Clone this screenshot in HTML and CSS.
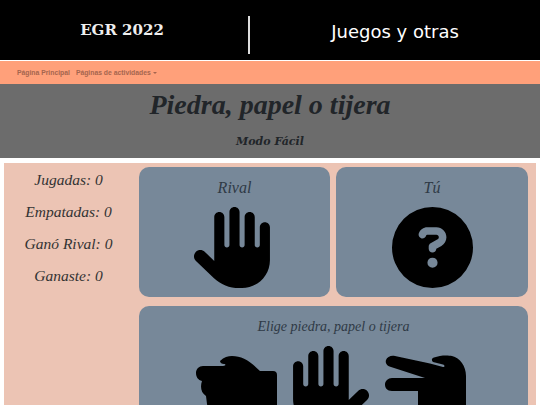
FILE: index.html
```html
<!DOCTYPE html>
<html lang="es">
<head>
  <meta charset="UTF-8">
  <meta name="viewport" content="width=device-width, initial-scale=1.0">
  <title>Piedra, papel o tijera</title>
  <link rel="stylesheet" href="styles.css">
</head>
<body>
  <header class="top">
    <div class="brand">EGR 2022</div>
    <div class="section"><span>Juegos y otras</span></div>
  </header>

  <nav class="menu">
    <a href="#">Página Principal</a>
    <a href="#">Páginas de actividades <i class="caret"></i></a>
  </nav>

  <div class="banner">
    <h1>Piedra, papel o tijera</h1>
    <h2>Modo Fácil</h2>
  </div>

  <main class="game">
    <aside class="score">
      <p>Jugadas: 0</p>
      <p>Empatadas: 0</p>
      <p>Ganó Rival: 0</p>
      <p>Ganaste: 0</p>
    </aside>

    <div class="board">
      <section class="card">
        <h3>Rival</h3>
        <svg class="icon" viewBox="0 0 512 512"><path d="M288 32c0-17.700-14.300-32-32-32s-32 14.300-32 32V240c0 8.800-7.200 16-16 16s-16-7.200-16-16V64c0-17.700-14.300-32-32-32s-32 14.300-32 32V336c0 1.500 0 3.100 .1 4.600L67.600 283c-16-15.200-41.300-14.600-56.600 1.400s-14.600 41.300 1.400 56.600L124.800 448c43.100 41.100 100.400 64 160 64H304c97.200 0 176-78.800 176-176V128c0-17.700-14.300-32-32-32s-32 14.300-32 32V240c0 8.800-7.200 16-16 16s-16-7.200-16-16V64c0-17.700-14.300-32-32-32s-32 14.300-32 32V240c0 8.800-7.200 16-16 16s-16-7.200-16-16V32z"/></svg>
      </section>

      <section class="card">
        <h3>Tú</h3>
        <svg class="icon" viewBox="0 0 512 512"><path d="M256 512A256 256 0 1 0 256 0a256 256 0 1 0 0 512zM169.800 165.300c7.900-22.300 29.100-37.300 52.800-37.300h58.300c34.900 0 63.100 28.300 63.100 63.100c0 22.600-12.100 43.500-31.700 54.800L280 264.400c-.2 13-10.900 23.600-24 23.600c-13.300 0-24-10.700-24-24V250.500c0-8.600 4.600-16.500 12.100-20.800l44.300-25.400c4.700-2.700 7.600-7.700 7.600-13.100c0-8.400-6.800-15.100-15.100-15.100H222.600c-3.400 0-6.400 2.100-7.500 5.300l-.4 1.200c-4.400 12.500-18.200 19-30.600 14.600s-19-18.200-14.600-30.600l.4-1.200zM224 352a32 32 0 1 1 64 0 32 32 0 1 1 -64 0z"/></svg>
      </section>

      <section class="card wide">
        <h3>Elige piedra, papel o tijera</h3>
        <div class="choices">
          <svg class="icon" viewBox="0 0 81 81"><path d="M24 15C28 11 32 10 36 10C46 10 54 15 64 25H77Q81 25 81 29V70Q81 81 70 81H32C20 81 13 72 11 58L10 50C5 47 4 41 6 35C2 34 0 31 0 27C0 23 3 20 7 20H27C30 20 30 18 28 18C26 18 24 17 24 15Z"/></svg>
          <svg class="icon flip" viewBox="0 0 512 512"><path d="M288 32c0-17.700-14.300-32-32-32s-32 14.300-32 32V240c0 8.800-7.200 16-16 16s-16-7.200-16-16V64c0-17.700-14.300-32-32-32s-32 14.300-32 32V336c0 1.500 0 3.100 .1 4.600L67.600 283c-16-15.200-41.300-14.600-56.600 1.400s-14.600 41.300 1.400 56.600L124.800 448c43.100 41.100 100.400 64 160 64H304c97.200 0 176-78.800 176-176V128c0-17.700-14.300-32-32-32s-32 14.300-32 32V240c0 8.800-7.200 16-16 16s-16-7.200-16-16V64c0-17.700-14.300-32-32-32s-32 14.300-32 32V240c0 8.800-7.200 16-16 16s-16-7.200-16-16V32z"/></svg>
          <svg class="icon scissors" viewBox="0 0 91 81"><path d="M15 10L50 17.500L63 21C65 21.500 65 19 63 18.500L53 16C51 14 52 12 54 11.500C60 9 68 9 72 10C80 12 86 20 86 30V70C86 76 82 81 76 81H48C42 81 38 76 38 70V45H12C7 45 5 42 5 38.500C5 35 8 32 12 32H45L11 21C7 20 5 17 6 14C7 11 11 9 15 10Z"/></svg>
        </div>
      </section>
    </div>
  </main>
</body>
</html>
```

FILE: styles.css
```css
html, body {
  margin: 0;
  padding: 0;
}

body {
  background-color: #fff;
  font-family: "Liberation Serif", serif;
  overflow: hidden;
}

/* Black title bar */
.top {
  display: flex;
  align-items: center;
  height: 60px;
  background-color: #000;
  color: #fff;
}

.brand {
  width: 248px;
  padding-right: 4px;
  box-sizing: border-box;
  text-align: center;
  font-family: "DejaVu Serif", serif;
  font-weight: bold;
  font-size: 15px;
  color: #eee;
}

.section {
  flex: 1;
  box-sizing: border-box;
  height: 38px;
  margin-top: 9px;
  padding-bottom: 7px;
  border-left: 2px solid #ddd;
  display: flex;
  align-items: center;
  justify-content: center;
  font-family: "DejaVu Sans", sans-serif;
  font-size: 18px;
}

/* Menu */
.menu {
  display: flex;
  gap: 6px;
  align-items: center;
  height: 23px;
  margin-top: 1px;
  padding-left: 17px;
  background-color: #ffa07a;
}

.menu a {
  color: #a5654e;
  text-decoration: none;
  font-family: "Liberation Sans", Arial, sans-serif;
  font-weight: bold;
  font-size: 6.800px;
}

.caret {
  display: inline-block;
  border-top: 2px solid #a5654e;
  border-left: 2px solid transparent;
  border-right: 2px solid transparent;
  vertical-align: middle;
}

/* Grey banner */
.banner {
  height: 74px;
  background-color: #6c6c6c;
  text-align: center;
  color: #212529;
}

.banner h1 {
  margin: 0;
  padding-top: 4px;
  font-family: "Liberation Serif", serif;
  font-style: italic;
  font-size: 28px;
  line-height: 34px;
}

.banner h2 {
  margin: 0;
  padding-top: 12px;
  font-family: "DejaVu Serif", serif;
  font-style: italic;
  font-size: 11px;
  line-height: 16px;
}

/* Game area */
.game {
  display: flex;
  margin: 5px 4px 0;
  padding: 4px 8px 8px 0;
  background-color: #ecc4b4;
}

.score {
  width: 135px;
  flex-shrink: 0;
  box-sizing: border-box;
  padding: 4px 6px 0 0;
  text-align: center;
  font-style: italic;
  font-size: 15.500px;
  color: #333;
}

.score p {
  margin: 0;
  height: 32px;
  line-height: 18px;
}

.board {
  flex: 1;
  display: grid;
  grid-template-columns: 191px 192px;
  grid-gap: 9px 6px;
}

.card {
  height: 130px;
  border-radius: 10px;
  background-color: #778899;
  text-align: center;
}

.card h3 {
  margin: 0;
  padding-top: 11px;
  height: 29px;
  font-weight: normal;
  font-style: italic;
  font-size: 16px;
  line-height: 20px;
  color: #2f3a46;
}

.wide {
  grid-column: 1 / 3;
  height: 140px;
}

.wide h3 {
  font-size: 14px;
}

.icon {
  display: block;
  width: 81px;
  height: 81px;
  margin: 0 auto;
}

.choices {
  display: flex;
  justify-content: center;
  gap: 11px;
}

.choices .icon {
  margin: 0;
}

.flip {
  transform: scaleX(-1);
}

.choices .scissors {
  width: 91px;
}
```
